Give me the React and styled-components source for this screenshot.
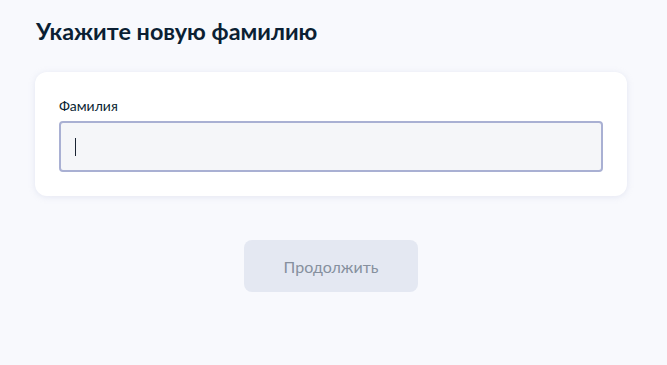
import React from "react";
import styled, { createGlobalStyle } from "styled-components";

const Global = createGlobalStyle`
  html, body { margin: 0; padding: 0; background: #f8f9fd; }
  body { font-family: Lato, "Noto Sans", sans-serif; }
  * { box-sizing: border-box; }
`;

const Page = styled.div`
  width: 667px;
  height: 365px;
  background: #f8f9fd;
  padding: 16px 40px 0 35px;
  display: flex;
  flex-direction: column;
`;

const Title = styled.h1`
  margin: 0 0 0 1px;
  font-size: 23.4px;
  line-height: 30px;
  font-weight: 700;
  color: #0b1f33;
`;

const Card = styled.div`
  margin-top: 26px;
  background: #ffffff;
  border-radius: 12px;
  box-shadow: 0 1px 6px rgba(170, 180, 210, 0.25);
  padding: 25px 24px 24px 24px;
  display: flex;
  flex-direction: column;
`;

const Label = styled.label`
  font-size: 14px;
  line-height: 17px;
  color: #0b1f33;
  margin-bottom: 7px;
`;

const Field = styled.div`
  position: relative;
`;

const Input = styled.input`
  width: 544px;
  height: 51px;
  border: 2px solid #a9b0d3;
  border-radius: 4px;
  background: #f5f6f9;
  padding: 0 16px;
  font-family: inherit;
  font-size: 16px;
  color: #0b1f33;
  outline: none;
`;

const Caret = styled.span`
  position: absolute;
  left: 16px;
  top: 17px;
  width: 1px;
  height: 18px;
  background: #1a2433;
`;

const Actions = styled.div`
  display: flex;
  justify-content: center;
  margin-top: 44px;
`;

const Button = styled.button`
  width: 174px;
  height: 52px;
  border: none;
  border-radius: 8px;
  background: #e4e8f2;
  color: #86909e;
  font-family: inherit;
  font-size: 16px;
  cursor: default;
`;

export default function App() {
  return (
    <>
      <Global />
      <Page>
        <Title>Укажите новую фамилию</Title>
        <Card>
          <Label>Фамилия</Label>
          <Field>
            <Input type="text" />
            <Caret />
          </Field>
        </Card>
        <Actions>
          <Button disabled>Продолжить</Button>
        </Actions>
      </Page>
    </>
  );
}
